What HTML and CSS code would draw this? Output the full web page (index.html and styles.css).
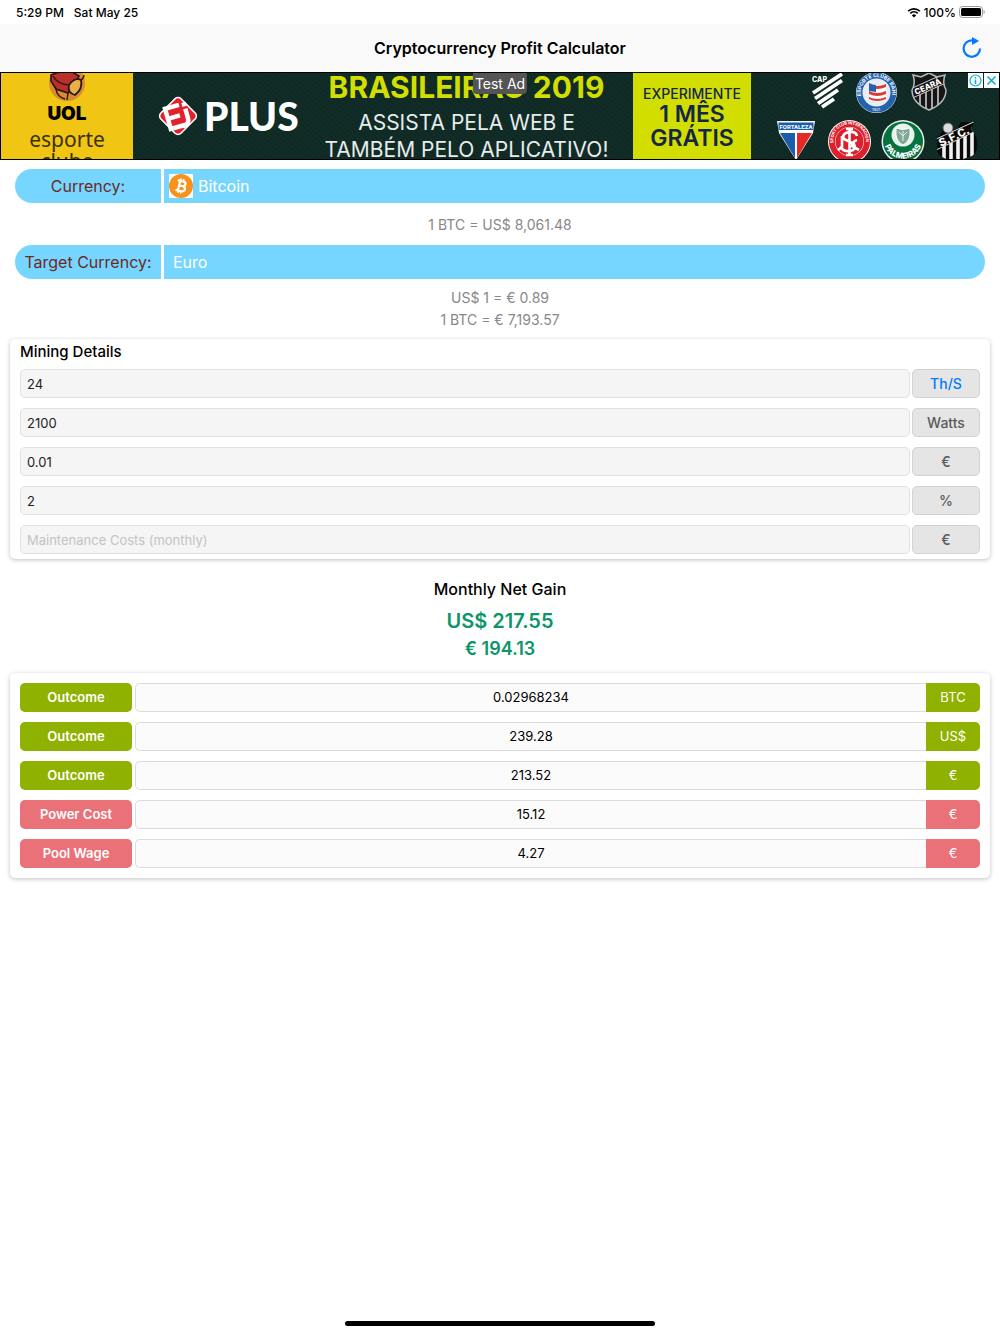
FILE: index.html
```html
<!DOCTYPE html>
<html lang="en">
<head>
	<meta charset="utf-8">
	<meta name="viewport" content="width=device-width, initial-scale=1">
	<title>Cryptocurrency Profit Calculator</title>
	<link rel="stylesheet" href="styles.css">
</head>
<body>
	<div class="status">
		<span>5:29 PM</span>
		<span>Sat May 25</span>
		<span class="status-right">
			<svg width="14" height="11" viewBox="0 0 14 11">
				<path d="M1.2 4.2a8.4 8.4 0 0 1 11.6 0M3.3 6.4a5.3 5.3 0 0 1 7.4 0" fill="none" stroke="#000" stroke-width="1.8"/>
				<path d="M7 10.6L4.9 8.4a3 3 0 0 1 4.2 0z"/>
			</svg>
			100%
			<svg width="26" height="12" viewBox="0 0 26 12">
				<rect x="0.5" y="0.5" width="23" height="11" rx="3" fill="none" stroke="#999"/>
				<rect x="2" y="2" width="20" height="8" rx="1.5"/>
				<path d="M24.6 4v4q1.2-.6 1.2-2t-1.2-2z" fill="#999"/>
			</svg>
		</span>
	</div>

	<header class="navbar">
		<h1>Cryptocurrency Profit Calculator</h1>
		<button type="button" class="reload" aria-label="Reload">
			<svg width="20" height="22" viewBox="0 0 20 22">
				<path d="M18 11.6a8.2 8.2 0 1 1-8.200-8.200h2" fill="none" stroke="#007aff" stroke-width="2.200"/>
				<path d="M10 0v8l7.200-4z" fill="#007aff"/>
			</svg>
		</button>
	</header>

	<section class="ad" aria-label="Test Ad">
		<div class="ad-uol">
			<svg width="38" height="29" viewBox="0 0 38 29">
				<circle cx="19" cy="10" r="18" fill="#d98a35"/>
				<path d="M3 2L19-4 31 3 27 11 20 20 8 16 3 8z" fill="#b9302a" stroke="#2b1510" stroke-width="1.6"/>
				<path d="M21 12q6-8 12-5 2 9-6 15-8-2-6-10z" fill="#e9b04a" stroke="#2b1510" stroke-width="1.8"/>
				<path d="M8 16q1 8 9 10M20 20l-1 7M5 3q4 8 16 9M33 7q3-2 3-5" fill="none" stroke="#2b1510" stroke-width="1.4"/>
			</svg>
			<b>UOL</b>
			<span>esporte</span>
			<span>clube</span>
		</div>
		<div class="ad-plus">
			<svg width="42" height="42" viewBox="0 0 42 42">
				<rect x="6" y="6" width="30" height="30" rx="5" transform="rotate(45 21 21)" fill="#fff"/>
				<rect x="7.500" y="7.500" width="27" height="27" rx="4" transform="rotate(45 21 21)" fill="#e3202c"/>
				<g transform="rotate(-16 21 21)" fill="none" stroke="#fff" stroke-width="4.500">
					<path d="M25 10.500H10.500v21H25M10.500 21H23"/>
					<path d="M30 16v10q0 6-7 6"/>
					<path d="M27.700 11.500h4.600" stroke-width="4"/>
				</g>
			</svg>
			<b>PLUS</b>
		</div>
		<div class="ad-text">
			<b>BRASILEIRÃO 2019</b>
			<span>ASSISTA PELA WEB E</span>
			<span>TAMBÉM PELO APLICATIVO!</span>
		</div>
		<div class="ad-offer">
			<small>EXPERIMENTE</small>
			<span>1 MÊS</span>
			<span>GRÁTIS</span>
		</div>
		<div class="ad-clubs">
			<svg viewBox="-9 8 248 86">
				<defs>
					<path id="bahia-arc" d="M101 31a15.800 15.800 0 1 1 31 0"/>
					<path id="inter-arc" d="M73.500 78a16.200 16.200 0 1 1 32 0"/>
					<path id="palmeiras-arc" d="M123.500 74a19.500 19.500 0 0 0 39 0"/>
					<clipPath id="ceara"><path d="M153 10l8 2 8-4 8 4 8-2q-3 8 1 15 0 13-17 20-17-7-17-20 4-7 1-15z"/></clipPath>
					<clipPath id="santos"><path d="M177 72q4-2 6-10l14 2 4-7h13l-3 7 5 7q4 16-4 20l-12 4-14-1q-10-5-9-10z"/></clipPath>
				</defs>
				<!-- CAP -->
				<text x="52" y="17" class="club-cap">CAP</text>
				<path d="M53 28l29-19M55 33.500l27-18M58 38.500l20-13.500M62 42l12-8" stroke="#fff" stroke-width="3.800" fill="none"/>
				<!-- Bahia -->
				<circle cx="116.500" cy="27.500" r="20.500" fill="#e8edf5"/>
				<circle cx="116.500" cy="27.500" r="17" fill="none" stroke="#2462ad" stroke-width="6"/>
				<text class="club-ring"><textPath href="#bahia-arc">ESPORTE CLUBE BAHIA</textPath></text>
				<path d="M109 18q8 4 17 0v16q-8 3-17 0z" fill="#fff"/>
				<path d="M109 19q8 4 17 0v3q-9 4-17 0zM109 26q8 4 17 0v3q-9 4-17 0zM109 32q8 4 17 0v2q-9 4-17 0z" fill="#db3933"/>
				<path d="M109 18q4 2 7 2v7l-7-1z" fill="#2462ad"/>
				<text x="112" y="46" class="club-year">1931</text>
				<!-- Ceara -->
				<path d="M153 10l8 2 8-4 8 4 8-2q-3 8 1 15 0 13-17 20-17-7-17-20 4-7 1-15z" fill="#161616"/>
				<g clip-path="url(#ceara)">
					<path d="M160 20v30M166 20v30M172 20v30M178 20v30" stroke="#ccc" stroke-width="1.600"/>
					<path d="M148 35l40-18v-10l-40 18z" fill="#161616" stroke="#ccc"/>
				</g>
				<text x="156" y="30" class="club-ceara" transform="rotate(-24 156 30)">CEARÁ</text>
				<path d="M153 10l8 2 8-4 8 4 8-2q-3 8 1 15 0 13-17 20-17-7-17-20 4-7 1-15z" fill="none" stroke="#bbb" stroke-width="1.500"/>
				<!-- Fortaleza -->
				<path d="M17 56h38l-2 12-17 27-17-27z" fill="#fff"/>
				<path d="M18.500 57.500h35v7.500h-35z" fill="#1b5daa"/>
				<text x="36" y="63.500" class="club-fortaleza">FORTALEZA</text>
				<path d="M20 68h15v25z" fill="#1b5daa"/>
				<path d="M37 68h15l-15 25z" fill="#e32a26"/>
				<!-- Internacional -->
				<circle cx="89.500" cy="76.500" r="21.500" fill="#fff"/>
				<circle cx="89.500" cy="76.500" r="17.500" fill="none" stroke="#dc202c" stroke-width="6"/>
				<circle cx="89.500" cy="76.500" r="14" fill="#dc202c"/>
				<text class="club-ring club-ring-inter"><textPath href="#inter-arc">SPORT CLUB INTERNACIONAL</textPath></text>
				<path d="M89.500 64v26M86 64h7M86 90h7M97 71q-1-5-8-4-8 2-5 7l10 5q3 6-4 7-8 1-9-5M82 71v11l-4 3M97 75q-4 1-5 6l7 4" fill="none" stroke="#fff" stroke-width="2.600"/>
				<!-- Palmeiras -->
				<circle cx="143" cy="76.500" r="21.500" fill="#e8f1ec"/>
				<circle cx="143" cy="76.500" r="20" fill="#04733f"/>
				<circle cx="143" cy="70" r="11.500" fill="#e8f1ec"/>
				<path d="M136 63q7 3 14 0v7q-1 7-7 10-6-3-7-10z" fill="#7fa992" stroke="#fff"/>
				<path d="M143 66v10M139 67l4 4 4-4" stroke="#e8f1ec" fill="none"/>
				<text class="club-palmeiras"><textPath href="#palmeiras-arc" startOffset="50%">PALMEIRAS</textPath></text>
				<!-- Santos -->
				<g clip-path="url(#santos)">
					<rect x="172" y="54" width="56" height="42" fill="#0a0a0a"/>
					<path d="M184 78v18M191 74v22M198 70v26M205 66v30M212 62v34" stroke="#f1f1f1" stroke-width="3.600"/>
					<path d="M174 86l44-21v-10l-44 20z" fill="#0a0a0a" stroke="#ddd"/>
				</g>
				<circle cx="188" cy="63" r="5" fill="#ddd" stroke="#666"/>
				<text x="181" y="82" class="club-santos" transform="rotate(-26 181 82)">S.F.C.</text>
			</svg>
		</div>
		<span class="ad-label">Test Ad</span>
		<div class="ad-choices">
			<button type="button" aria-label="Ad info">
				<svg width="15" height="15" viewBox="0 0 15 15">
					<circle cx="7.500" cy="7.500" r="5.500" fill="none" stroke="#00aecd" stroke-width="1.200"/>
					<path d="M7.500 6.500v4.500M7.500 4v1.400" stroke="#00aecd" stroke-width="1.500"/>
				</svg>
			</button>
			<button type="button" aria-label="Close ad">
				<svg width="15" height="15" viewBox="0 0 15 15">
					<path d="M3.500 3.500l8 8M11.500 3.500l-8 8" stroke="#00aecd" stroke-width="1.500"/>
				</svg>
			</button>
		</div>
	</section>

	<main>
		<div class="picker">
			<label for="currency">Currency:</label>
			<div class="picker-value">
				<svg class="coin" width="24" height="24" viewBox="0 0 24 24">
					<rect width="24" height="24" fill="#fff"/>
					<circle cx="12" cy="12" r="12" fill="#f7931a"/>
					<g transform="rotate(13 12 12)" fill="none" stroke="#fff">
						<path d="M7.500 7h5.500q3 0 3 2.400T13 11.800H10M13 11.800q3.600 0 3.600 2.600T13 17H7.500M10 7v10" stroke-width="2.200"/>
						<path d="M10.500 4.500v3M13.200 4.500v3M10.500 16.500v3M13.200 16.500v3" stroke-width="1.500"/>
					</g>
				</svg>
				<select id="currency">
					<option>Bitcoin</option>
				</select>
			</div>
		</div>
		<p class="rate">1 BTC = US$ 8,061.48</p>

		<div class="picker">
			<label for="target">Target Currency:</label>
			<div class="picker-value">
				<select id="target">
					<option>Euro</option>
				</select>
			</div>
		</div>
		<p class="rate rate-double">US$ 1 = € 0.89<br>1 BTC = € 7,193.57</p>

		<form class="card mining">
			<h2>Mining Details</h2>
			<div class="field">
				<input type="text" value="24" aria-label="Hash rate">
				<button type="button" class="unit unit-link">Th/S</button>
			</div>
			<div class="field">
				<input type="text" value="2100" aria-label="Power consumption">
				<span class="unit">Watts</span>
			</div>
			<div class="field">
				<input type="text" value="0.01" aria-label="Energy price">
				<span class="unit">€</span>
			</div>
			<div class="field">
				<input type="text" value="2" aria-label="Pool fee">
				<span class="unit">%</span>
			</div>
			<div class="field">
				<input type="text" placeholder="Maintenance Costs (monthly)" aria-label="Maintenance Costs (monthly)">
				<span class="unit">€</span>
			</div>
		</form>

		<div class="gain">
			<h2>Monthly Net Gain</h2>
			<p class="gain-main">US$ 217.55</p>
			<p class="gain-target">€ 194.13</p>
		</div>

		<div class="card results">
			<table>
				<tr class="income"><th scope="row"><span>Outcome</span></th><td class="value"><span>0.02968234</span></td><td class="coin-unit"><span>BTC</span></td></tr>
				<tr class="income"><th scope="row"><span>Outcome</span></th><td class="value"><span>239.28</span></td><td class="coin-unit"><span>US$</span></td></tr>
				<tr class="income"><th scope="row"><span>Outcome</span></th><td class="value"><span>213.52</span></td><td class="coin-unit"><span>€</span></td></tr>
				<tr class="cost"><th scope="row"><span>Power Cost</span></th><td class="value"><span>15.12</span></td><td class="coin-unit"><span>€</span></td></tr>
				<tr class="cost"><th scope="row"><span>Pool Wage</span></th><td class="value"><span>4.27</span></td><td class="coin-unit"><span>€</span></td></tr>
			</table>
		</div>
	</main>

	<div class="home-bar"></div>
</body>
</html>
```

FILE: styles.css
```css
* {
	box-sizing: border-box;
}

body {
	margin: 0;
	min-height: 100vh;
	display: flex;
	flex-direction: column;
	background: #fff;
	color: #000;
	font-family: Inter, "Liberation Sans", sans-serif;
	font-size: 14px;
}

h1, h2, p {
	margin: 0;
}

button, input, select {
	font: inherit;
}

/* status bar and title */
.status {
	display: flex;
	align-items: center;
	gap: 10px;
	height: 24px;
	padding: 0 15px 0 16px;
	font-size: 12px;
	font-weight: 500;
}

.status-right {
	display: flex;
	align-items: center;
	gap: 3px;
	margin-left: auto;
}

.navbar {
	display: grid;
	grid-template-columns: 1fr auto 1fr;
	align-items: center;
	height: 48px;
	padding: 0 18px;
	background: #f9f9f9;
}

.navbar h1 {
	grid-column: 2;
	font-size: 16px;
	font-weight: 600;
}

.reload {
	justify-self: end;
	display: flex;
	padding: 0;
	border: 0;
	background: none;
}

/* ad banner */
.ad {
	position: relative;
	display: grid;
	grid-template-columns: minmax(0, 132fr) minmax(0, 193fr) minmax(0, 307fr) minmax(0, 118fr) minmax(0, 248fr);
	height: 88px;
	overflow: hidden;
	border: 1px solid #000;
	background: repeating-linear-gradient(45deg, #0f2924 0 2px, #122d28 2px 4px);
	color: #fff;
	white-space: nowrap;
}

.ad-uol {
	display: flex;
	flex-direction: column;
	align-items: center;
	height: 86px;
	overflow: hidden;
	background: #f0c514;
	color: #000;
}

.ad-uol svg {
	flex: none;
}

.ad-uol b {
	flex: none;
	margin: 2px 0 4px;
	font-size: 19px;
	font-weight: 900;
	line-height: 20px;
}

.ad-uol span {
	flex: none;
	font-family: "Noto Sans", sans-serif;
	font-size: 21px;
	line-height: 22px;
	color: #3a3005;
}

.ad-plus {
	display: flex;
	align-items: center;
	gap: 5px;
	padding: 0 0 4px 24px;
}

.ad-plus b {
	font-family: Lato, sans-serif;
	font-size: 39px;
	font-weight: 900;
}

.ad-text {
	display: flex;
	flex-direction: column;
	align-items: center;
	padding-right: 26px;
	color: #e8eceb;
	font-size: 21px;
	line-height: 27px;
}

.ad-text b {
	margin-bottom: 8px;
	color: #d2de00;
	font-size: 30px;
	font-weight: 700;
	line-height: 28px;
}

.ad-offer {
	display: flex;
	flex-direction: column;
	align-items: center;
	padding-top: 13px;
	background: #d2de00;
	color: #14264a;
	font-size: 23px;
	font-weight: 600;
	line-height: 24px;
}

.ad-offer small {
	font-size: 14px;
	font-weight: 500;
	line-height: 16px;
}

.ad-clubs svg {
	display: block;
	width: 100%;
	height: 86px;
}

.club-cap {
	fill: #fff;
	font-size: 7px;
	font-weight: 800;
}

.club-ring {
	fill: #fff;
	font-size: 5px;
	font-weight: 700;
}

.club-ring-inter {
	font-size: 4px;
}

.club-year {
	fill: #fff;
	font-size: 4px;
}

.club-ceara {
	fill: #fff;
	font-size: 8px;
	font-weight: 800;
}

.club-fortaleza {
	fill: #fff;
	font-family: Roboto, sans-serif;
	font-size: 6px;
	font-weight: 700;
	text-anchor: middle;
}

.club-palmeiras {
	fill: #fff;
	font-size: 8px;
	font-weight: 800;
	text-anchor: middle;
}

.club-santos {
	fill: #fff;
	font-size: 11px;
	font-weight: 800;
}

.ad-label {
	position: absolute;
	top: 0;
	left: 50%;
	transform: translateX(-50%);
	padding: 0 2px;
	border-radius: 0 0 4px 4px;
	background: #555;
	font-size: 14px;
	line-height: 21px;
}

.ad-choices {
	position: absolute;
	top: 0;
	right: 0;
	display: flex;
	gap: 1px;
}

.ad-choices button {
	display: flex;
	padding: 0;
	border: 0;
	background: #fff;
}

/* currency pickers */
main {
	padding: 9px 10px;
}

.picker {
	display: flex;
	gap: 3px;
	height: 34px;
	margin: 0 5px;
	overflow: hidden;
	border-radius: 17px;
	font-size: 16px;
}

.picker label {
	flex: 0 0 146px;
	background: #76d6ff;
	color: #6b2a25;
	line-height: 34px;
	text-align: center;
}

.picker-value {
	flex: 1;
	display: flex;
	align-items: center;
	gap: 5px;
	padding-left: 5px;
	background: #76d6ff;
}

.picker select {
	flex: 1;
	height: 34px;
	padding: 0;
	border: 0;
	appearance: none;
	background: none;
	color: #fff;
}

#target {
	padding-left: 4px;
}

.rate {
	padding: 11px 0 10px;
	color: #888;
	font-size: 14px;
	line-height: 21px;
	text-align: center;
}

.rate-double {
	padding: 8px 0;
	line-height: 22px;
}

/* cards */
.card {
	border-radius: 5px;
	background: #fff;
	box-shadow: 0 1px 4px rgba(0, 0, 0, 0.25);
}

.mining {
	padding: 0 10px 5px;
}

.mining h2 {
	font-size: 15px;
	font-weight: 500;
	line-height: 26px;
	margin-bottom: 4px;
}

.field {
	display: flex;
	gap: 2px;
	margin-bottom: 10px;
}

.field:last-child {
	margin-bottom: 0;
}

.field input {
	flex: 1;
	min-width: 0;
	height: 29px;
	padding: 0 6px;
	border: 1px solid #e1e1e1;
	border-radius: 5px;
	background: #f5f5f5;
	color: #222;
	font-size: 13px;
}

.field input::placeholder {
	color: #c3c3c6;
}

.unit {
	flex: 0 0 68px;
	height: 29px;
	padding: 0;
	border: 1px solid #d2d2d2;
	border-radius: 5px;
	background: #e5e5e5;
	color: #5a5a5a;
	font-weight: 500;
	line-height: 27px;
	text-align: center;
}

.unit-link {
	color: #007aff;
}

.gain {
	padding: 18px 0 13px;
	text-align: center;
}

.gain h2 {
	font-size: 16px;
	font-weight: 500;
	line-height: 24px;
}

.gain p {
	color: #0c9569;
	font-weight: 600;
}

.gain .gain-main {
	font-size: 20px;
	line-height: 32px;
	padding-top: 4px;
}

.gain .gain-target {
	font-size: 18px;
	line-height: 23px;
}

.results {
	padding: 0 10px;
}

.results table {
	width: 100%;
	table-layout: fixed;
	border-collapse: separate;
	border-spacing: 0 10px;
	font-size: 13px;
}

.results th, .results td {
	padding: 0;
	text-align: center;
}

.results th {
	width: 115px;
	padding-right: 3px;
	font-weight: 600;
}

.results span {
	display: block;
	height: 29px;
	line-height: 29px;
}

.results th span {
	border-radius: 5px;
	color: #fff;
}

.results .value span {
	border: 1px solid #dcdcdc;
	border-right: 0;
	border-radius: 5px 0 0 5px;
	background: #fbfbfb;
	line-height: 27px;
}

.results .coin-unit {
	width: 54px;
}

.coin-unit span {
	border-radius: 0 5px 5px 0;
	color: #fff;
}

.income th span, .income .coin-unit span {
	background: #8fb100;
}

.cost th span, .cost .coin-unit span {
	background: #ea7178;
}

.home-bar {
	width: 31%;
	height: 5px;
	margin: auto auto 8px;
	border-radius: 3px;
	background: #000;
}
```
